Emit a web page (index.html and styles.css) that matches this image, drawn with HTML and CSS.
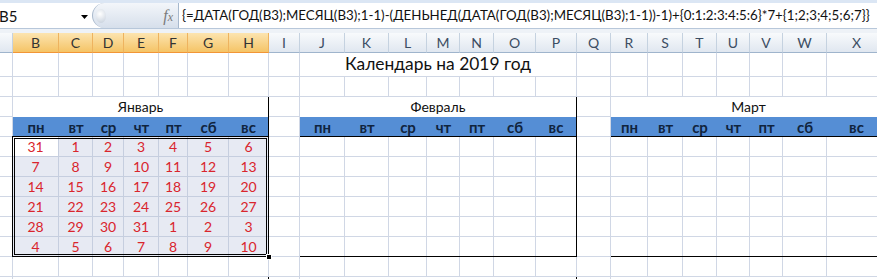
FILE: index.html
```html
<!DOCTYPE html>
<html lang="ru">
<head>
    <meta charset="UTF-8">
    <title>Календарь на 2019 год</title>
    <link rel="stylesheet" href="styles.css">
</head>
<body>
    <div class="ribbon-edge"></div>
    <div class="formula-bar">
        <div class="name-box">
            <span class="cell-ref">B5</span>
            <svg class="arrow" width="7" height="4" viewBox="0 0 7 4"><path d="M0 0h7L3.5 4z" fill="#000"/></svg>
        </div>
        <div class="fx-area">
            <span class="knob"></span>
            <span class="fx">f<i>x</i></span>
        </div>
        <div class="formula">{=ДАТА(ГОД(B3);МЕСЯЦ(B3);1-1)-(ДЕНЬНЕД(ДАТА(ГОД(B3);МЕСЯЦ(B3);1-1))-1)+{0:1:2:3:4:5:6}*7+{1;2;3;4;5;6;7}}</div>
    </div>
    <div class="gap"></div>

    <div class="sheet">
        <div class="sheet-title">Календарь на 2019 год</div>
        <div class="month jan" data-name="Январь"></div>
        <div class="month feb" data-name="Февраль"></div>
        <div class="month mar" data-name="Март"></div>
        <!-- следующий ряд месяцев, виден только верхний край -->
        <div class="month apr"></div>
        <div class="month may"></div>
        <div class="month jun"></div>
    </div>

    <script>
        const sheet = document.querySelector('.sheet');
        const letters = 'ABCDEFGHIJKLMNOPQRSTUVWX'.split('');
        const weekdays = ['пн', 'вт', 'ср', 'чт', 'пт', 'сб', 'вс'];

        letters.forEach((letter, i) => {
            const head = document.createElement('div');
            head.className = 'col-head' + (i >= 1 && i <= 7 ? ' selected' : '');
            head.textContent = i === 0 ? '' : letter;
            sheet.appendChild(head);
        });

        // пустые ячейки листа, лишние уходят вниз за край окна
        for (let i = 0; i < 24 * 14; i++) {
            const cell = document.createElement('div');
            cell.className = 'cell';
            sheet.appendChild(cell);
        }

        function buildMonth(box, dates) {
            const title = document.createElement('div');
            title.className = 'month-title';
            title.textContent = box.dataset.name;
            box.appendChild(title);

            weekdays.forEach((name) => {
                const wd = document.createElement('div');
                wd.className = 'wd';
                wd.textContent = name;
                box.appendChild(wd);
            });

            const days = document.createElement('div');
            days.className = 'days';
            for (let i = 0; i < 42; i++) {
                const day = document.createElement('div');
                day.className = 'day';
                day.textContent = dates ? dates[i] : '';
                days.appendChild(day);
            }
            box.appendChild(days);
            return days;
        }

        const janDates = [];
        const start = new Date(2018, 11, 31);
        for (let i = 0; i < 42; i++) {
            const d = new Date(start);
            d.setDate(start.getDate() + i);
            janDates.push(d.getDate());
        }

        document.querySelectorAll('.month[data-name]').forEach((box) => {
            const isJan = box.classList.contains('jan');
            const days = buildMonth(box, isJan ? janDates : null);
            if (isJan) {
                days.classList.add('selected');
                days.firstChild.classList.add('active');
            }
        });
    </script>
</body>
</html>
```

FILE: styles.css
```css
body {
    margin: 0;
    width: 877px;
    height: 279px;
    overflow: hidden;
    background-color: #fff;
    font-family: Lato, "Liberation Sans", sans-serif;
    color: #111;
}

.ribbon-edge {
    height: 3px;
    background-color: #dbe6f4;
}

.formula-bar {
    display: flex;
    height: 25px;
    border-bottom: 1px solid #b7c7da;
    background-color: #fff;
}

.name-box {
    width: 92px;
    display: flex;
    align-items: center;
    justify-content: space-between;
    padding-right: 4px;
    box-sizing: border-box;
    font-size: 15px;
}

.cell-ref {
    margin-left: -1px;
}

.arrow {
    margin-top: 2px;
}

.fx-area {
    width: 86px;
    display: flex;
    align-items: center;
    justify-content: space-between;
    padding: 0 5px 0 3px;
    box-sizing: border-box;
    border-radius: 13px 0 0 13px;
    border-left: 1px solid #a9b9cc;
    background: linear-gradient(#f3f6fa, #d6dfeb);
}

.knob {
    width: 10px;
    height: 14px;
    border-radius: 50%;
    background: radial-gradient(circle at 40% 35%, #fff, #c2ccd9);
}

.fx {
    font-family: "Liberation Serif", serif;
    font-style: italic;
    font-size: 16px;
    color: #7b7b7b;
}

.fx i {
    font-size: 12px;
}

.formula {
    flex: 1;
    border-left: 1px solid #a6b8cd;
    padding-left: 3px;
    font-size: 13.3px;
    line-height: 25px;
    white-space: nowrap;
    overflow: hidden;
}

.gap {
    height: 4px;
    background-color: #eef2f7;
}

.sheet {
    display: grid;
    grid-template-columns: 13px 46px 34px 31px 35px 29px 41px 40px 31px 45px 44px 38px 33px 34px 42px 41px 34px 37px 35px 34px 33px 33px 44px 60px;
    grid-template-rows: 20px 24px 20px;
    grid-auto-rows: 20px;
    width: 887px;
}

.col-head {
    border-right: 1px solid #c5d2e0;
    border-bottom: 1px solid #9fb4cc;
    background: linear-gradient(#f8fafc, #e0e7f0);
    font-size: 14px;
    line-height: 19px;
    text-align: center;
    color: #3c4d63;
}

.col-head.selected {
    background: linear-gradient(#fce4b0, #f5c466);
    border-right-color: #eeb35f;
    border-bottom-color: #f29536;
    color: #333;
}

.cell {
    border-right: 1px solid #d0d7e5;
    border-bottom: 1px solid #d0d7e5;
}

.sheet-title {
    grid-column: 10 / 17;
    grid-row: 2;
    display: flex;
    align-items: flex-end;
    justify-content: center;
    padding-bottom: 2px;
    border-right: 1px solid #d0d7e5;
    border-bottom: 1px solid #d0d7e5;
    font-size: 17.4px;
}

.month {
    margin: -1px 0 0 -1px;
    border: 1px solid #000;
    display: grid;
    grid-template-rows: 20px 20px;
    background-color: #fff;
}

.jan, .apr {
    grid-column: 2 / 9;
    grid-template-columns: 46px 34px 31px 35px 29px 41px 39px;
}

.feb, .may {
    grid-column: 10 / 17;
    grid-template-columns: 45px 44px 38px 33px 34px 42px 40px;
}

.mar, .jun {
    grid-column: 18 / 25;
    grid-template-columns: 37px 35px 34px 33px 33px 44px 59px;
}

.jan, .feb, .mar {
    grid-row: 4 / 12;
}

.apr, .may, .jun {
    grid-row: 13 / 21;
}

.month-title {
    grid-column: 1 / -1;
    font-size: 14px;
    line-height: 20px;
    text-align: center;
}

.wd {
    background-color: #558ed5;
    border-bottom: 1px solid #000;
    font-size: 15px;
    font-weight: bold;
    line-height: 20px;
    text-align: center;
    color: #10243e;
}

.days {
    grid-column: 1 / -1;
    display: grid;
    grid-template-columns: inherit;
    grid-template-rows: repeat(5, 20px) 19px;
}

.day {
    border-right: 1px solid #d0d7e5;
    border-bottom: 1px solid #d0d7e5;
    font-size: 14px;
    line-height: 19px;
    text-align: center;
    color: #d9252d;
}

.day:nth-child(7n) {
    border-right: none;
}

.day:nth-child(n+36) {
    border-bottom: none;
}

.days.selected {
    position: relative;
    background-color: #e7eaf3;
}

.days.selected .day {
    border-color: #c6cedf;
}

.days.selected .day.active {
    background-color: #fff;
}

/* рамка выделения и маркер заполнения */
.days.selected::after {
    content: "";
    position: absolute;
    inset: -1px;
    border: 3px double #000;
    pointer-events: none;
}

.days.selected::before {
    content: "";
    position: absolute;
    right: -4px;
    bottom: -4px;
    width: 4px;
    height: 4px;
    border: 1px solid #fff;
    background-color: #000;
    z-index: 1;
}
```
